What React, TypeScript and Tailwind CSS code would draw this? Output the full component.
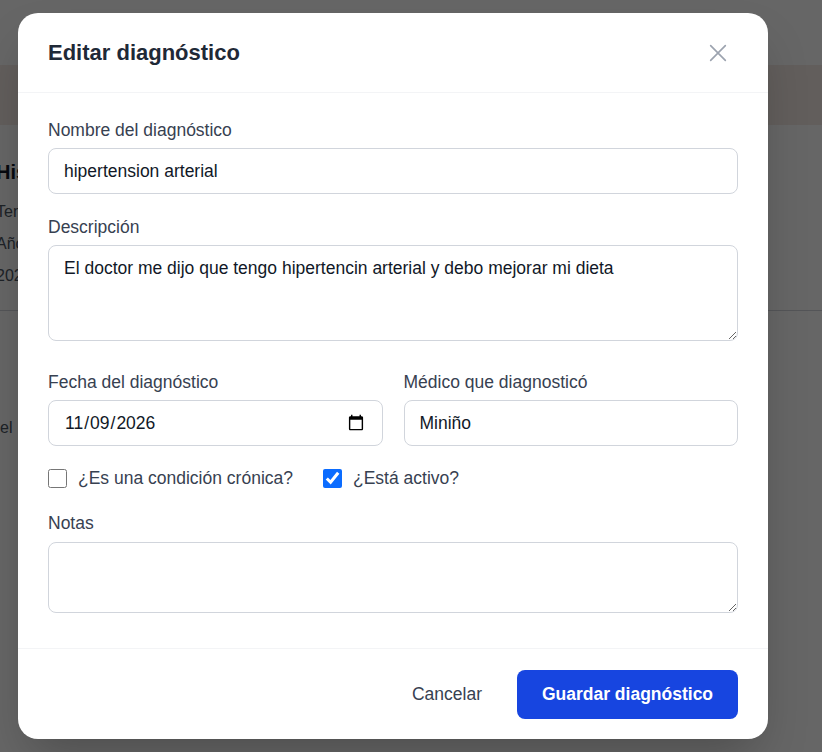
export default function App() {
  return (
    <div className="relative w-[822px] h-[752px] overflow-hidden bg-white" style={{ fontFamily: '"Liberation Sans", Arial, sans-serif' }}>
      {/* page underneath */}
      <div className="absolute inset-0">
        <div className="h-[65px]" />
        <div className="h-[60px] bg-[#f6ebe5]" />
        <div className="pt-[33px] text-[#111827]">
          <div className="text-xl font-bold -ml-[4px]">Historial</div>
          <div className="mt-[14px] text-base text-[#4b5563] -ml-[4px] space-y-[8px]">
            <div>Tengo</div><div>Años</div><div>2026</div>
          </div>
        </div>
        <div className="mt-[22px] border-t border-gray-300" />
        <div className="mt-[105px] text-base text-[#4b5563]">el</div>
      </div>
      <div className="absolute inset-0 bg-black/60" />

      <div className="absolute left-[18px] top-[13px] w-[750px] h-[726px] bg-white rounded-[20px] shadow-2xl flex flex-col">
        <div className="h-[80px] px-[30px] flex items-center justify-between border-b border-gray-100">
          <h2 className="text-[22px] font-bold text-[#1f2937]">Editar diagnóstico</h2>
          <svg width="22" height="22" viewBox="0 0 24 24" fill="none" stroke="#9ca3af" strokeWidth="1.8" strokeLinecap="round" className="mr-[9px]"><path d="M4 4l16 16M20 4L4 20" /></svg>
        </div>
        <div className="flex-1 px-[30px] pt-[25px] text-[#374151] text-[17.5px] leading-6">
          <label className="block">Nombre del diagnóstico</label>
          <input defaultValue="hipertension arterial" className="mt-[6px] w-full h-[46px] px-[15px] rounded-lg border border-gray-300 text-[#111827] outline-none" />
          <label className="block mt-[21px]">Descripción</label>
          <textarea defaultValue="El doctor me dijo que tengo hipertencin arterial y debo mejorar mi dieta" className="block mt-[6px] w-full h-[96px] px-[15px] py-[10px] rounded-lg border border-gray-300 text-[#111827] outline-none" />
          <div className="grid grid-cols-2 gap-[21px] mt-[29px]">
            <div>
              <label className="block">Fecha del diagnóstico</label>
              <input type="date" defaultValue="2026-11-09" className="mt-[6px] w-full h-[46px] px-[15px] rounded-lg border border-gray-300 text-[#111827] outline-none" />
            </div>
            <div>
              <label className="block">Médico que diagnosticó</label>
              <input defaultValue="Miniño" className="mt-[6px] w-full h-[46px] px-[15px] rounded-lg border border-gray-300 text-[#111827] outline-none" />
            </div>
          </div>
          <div className="flex items-center gap-[30px] mt-[20px]">
            <label className="flex items-center gap-[11px]"><input type="checkbox" className="w-[19px] h-[19px]" />¿Es una condición crónica?</label>
            <label className="flex items-center gap-[11px]"><input type="checkbox" defaultChecked className="w-[19px] h-[19px] accent-[#0b6cff]" />¿Está activo?</label>
          </div>
          <label className="block mt-[21px]">Notas</label>
          <textarea className="block mt-[7px] w-full h-[71px] px-[15px] py-[10px] rounded-lg border border-gray-300 outline-none" />
        </div>
        <div className="h-[91px] border-t border-gray-100 px-[30px] flex items-center justify-end gap-[35px] text-[17.5px]">
          <button className="text-[#374151]">Cancelar</button>
          <button className="h-[49px] w-[221px] rounded-lg bg-[#1745e0] text-white font-bold">Guardar diagnóstico</button>
        </div>
      </div>
    </div>
  );
}
